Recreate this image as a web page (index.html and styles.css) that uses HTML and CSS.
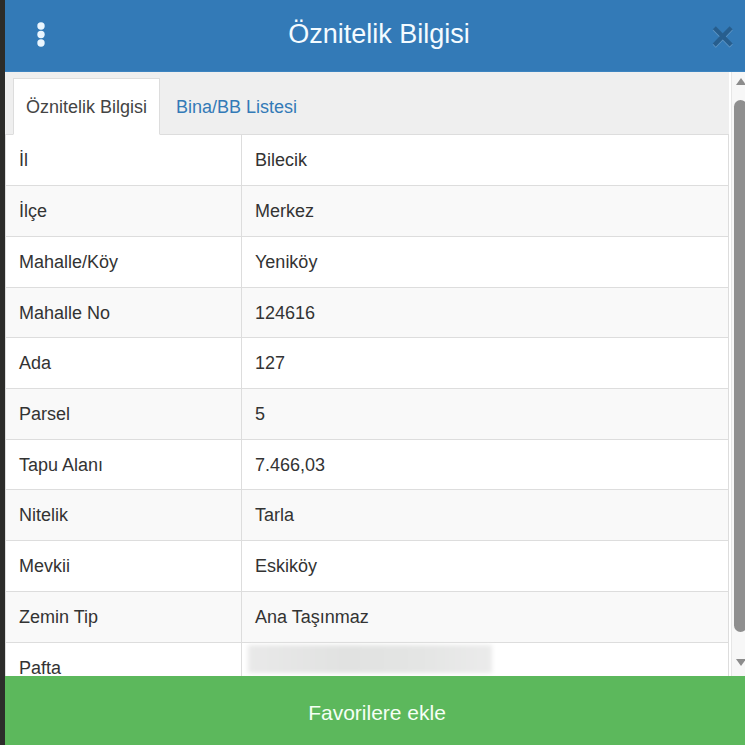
FILE: index.html
```html
<!DOCTYPE html>
<html lang="tr">
<head>
<meta charset="utf-8">
<title>Öznitelik Bilgisi</title>
<link rel="stylesheet" href="styles.css">
</head>
<body>
<div class="modal">
  <header class="mhead">
    <button class="kebab" aria-label="Menü">
      <svg width="12" height="28" viewBox="0 0 12 28"><circle cx="6" cy="5" r="3.7" fill="#eaf6ff"/><circle cx="6" cy="13.5" r="3.7" fill="#eaf6ff"/><circle cx="6" cy="22" r="3.7" fill="#eaf6ff"/></svg>
    </button>
    <h1 class="title">Öznitelik Bilgisi</h1>
    <button class="close" aria-label="Kapat">×</button>
  </header>
  <div class="mbody">
    <div class="scroll">
      <ul class="tabs">
        <li class="tab active">Öznitelik Bilgisi</li>
        <li class="tab">Bina/BB Listesi</li>
      </ul>
      <table class="attrs">
        <tr><td class="k">İl</td><td>Bilecik</td></tr>
        <tr><td class="k">İlçe</td><td>Merkez</td></tr>
        <tr><td class="k">Mahalle/Köy</td><td>Yeniköy</td></tr>
        <tr><td class="k">Mahalle No</td><td>124616</td></tr>
        <tr><td class="k">Ada</td><td>127</td></tr>
        <tr><td class="k">Parsel</td><td>5</td></tr>
        <tr><td class="k">Tapu Alanı</td><td>7.466,03</td></tr>
        <tr><td class="k">Nitelik</td><td>Tarla</td></tr>
        <tr><td class="k">Mevkii</td><td>Eskiköy</td></tr>
        <tr><td class="k">Zemin Tip</td><td>Ana Taşınmaz</td></tr>
        <tr><td class="k">Pafta</td><td class="blurcell"><div class="blur"></div></td></tr>
      </table>
    </div>
    <div class="sbar">
      <div class="sbtn"><span class="arr-up"></span></div>
      <div class="track"><div class="thumb"></div></div>
      <div class="sbtn"><span class="arr-down"></span></div>
    </div>
  </div>
  <footer class="mfoot">Favorilere ekle</footer>
</div>
</body>
</html>
```
FILE: styles.css
```css
* { box-sizing: border-box; }
html, body { margin: 0; padding: 0; }
body {
  background: #2c2c2a;
  width: 745px;
  height: 745px;
  overflow: hidden;
  font-family: "Liberation Sans", Arial, Helvetica, sans-serif;
  color: #333;
}
.modal {
  margin-left: 5px;
  width: 744px;
  height: 745px;
  display: flex;
  flex-direction: column;
  background: #fff;
}
.mhead {
  height: 72px;
  flex: none;
  background: #337ab7;
  display: grid;
  grid-template-columns: 72px 1fr 72px;
  align-items: center;
  border-bottom: 1px solid #3d84c0;
}
.kebab {
  justify-self: center;
  background: none;
  border: 0;
  padding: 0;
  display: flex;
  margin-top: -2px;
}
.title {
  margin: 0;
  text-align: center;
  font-weight: normal;
  font-size: 27px;
  color: #f4fbff;
  line-height: 1;
  margin-top: -2px;
  padding-left: 4px;
}
.close {
  justify-self: start;
  margin-left: 34px;
  background: none;
  border: 0;
  padding: 0;
  font-family: "Liberation Sans", Arial, sans-serif;
  font-weight: bold;
  font-size: 40px;
  line-height: 1;
  color: #000;
  opacity: .22;
  text-shadow: 0 1px 0 #fff;
  margin-top: 0;
}
.mbody {
  flex: 1;
  display: flex;
  min-height: 0;
}
.scroll {
  flex: 1;
  overflow: hidden;
  background: #fff;
}
.tabs {
  list-style: none;
  margin: 0;
  padding: 6px 0 0 8px;
  display: flex;
  background: #efefef;
  border-bottom: 1px solid #ddd;
  height: 63px;
  margin-right: 2px;
}
.tab {
  padding: 0 12px;
  font-size: 18px;
  line-height: 56px;
  height: 57px;
  margin-bottom: -1px;
  color: #337ab7;
  border: 1px solid transparent;
  margin-right: 3px;
}
.tab.active {
  background: #fff;
  color: #444;
  border-color: #ddd;
  border-bottom-color: #fff;
}
.attrs {
  width: calc(100% - 2px);
  border-collapse: collapse;
  font-size: 18px;
  line-height: 25.7px;
  border-left: 1px solid #ddd;
}
.attrs td {
  padding: 13px 13px 11px;
  border-top: 1px solid #ddd;
  border-right: 1px solid #ddd;
  vertical-align: top;
  height: 50.7px;
}
.attrs td.k { width: 236px; }
.attrs tr:nth-child(even) td { background: #f9f9f9; }
.attrs tr:first-child td { border-top: 0; }
.blurcell { padding-left: 6px !important; padding-top: 2px !important; }
.blur {
  width: 244px;
  height: 28px;
  background: linear-gradient(90deg, #e9e9e9, #e1e2e1 40%, #e4e5e4 70%, #ebebeb);
  filter: blur(2px);
}
.sbar {
  width: 18px;
  flex: none;
  background: #f7f7f7;
  border-left: 1px solid #e6e6e6;
  display: flex;
  flex-direction: column;
}
.sbtn {
  height: 24px;
  flex: none;
  display: flex;
  align-items: center;
  justify-content: center;
}
.arr-up {
  width: 0; height: 0;
  border-left: 5px solid transparent;
  border-right: 5px solid transparent;
  border-bottom: 7px solid #8c8c8c;
  margin-top: -6px;
}
.arr-down {
  width: 0; height: 0;
  border-left: 5px solid transparent;
  border-right: 5px solid transparent;
  border-top: 7px solid #8c8c8c;
  margin-top: -4px;
}
.track {
  flex: 1;
  padding: 4px 2px 0 2px;
}
.thumb {
  height: 532px;
  background: #8f8f8f;
  border-radius: 7px;
}
.mfoot {
  height: 69px;
  flex: none;
  background: #5cb85c;
  color: #f5fff5;
  font-size: 21px;
  display: flex;
  align-items: center;
  justify-content: center;
  padding-top: 4px;
}
```
